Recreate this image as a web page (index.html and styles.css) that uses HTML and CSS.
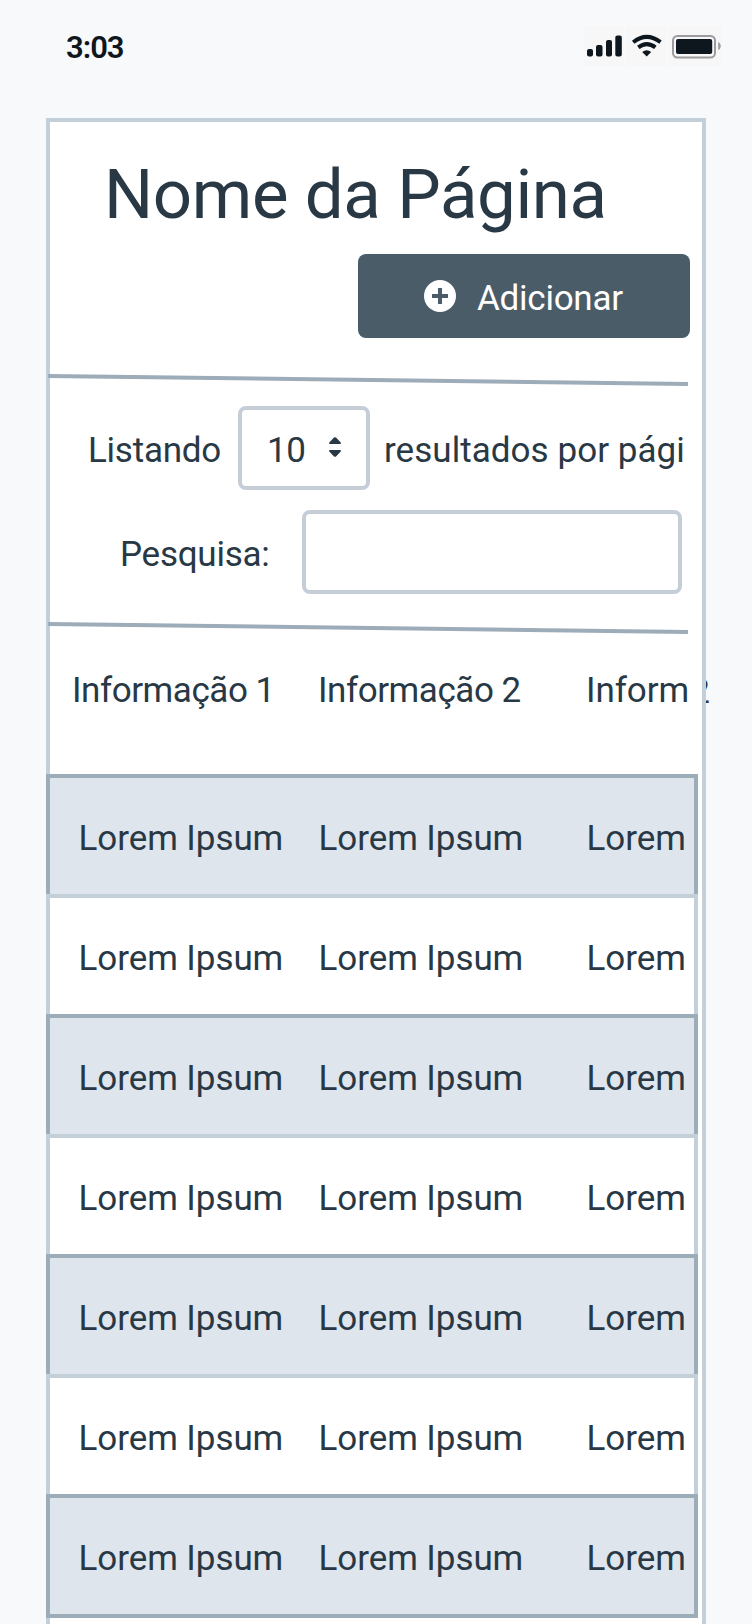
FILE: index.html
```html
<!DOCTYPE html>
<html lang="pt-BR">
<head>
<meta charset="utf-8">
<title>Nome da Página</title>
<link rel="stylesheet" href="styles.css">
</head>
<body>
<div class="screen">
  <header class="status">
    <span class="time">3:03</span>
    <div class="status-icons">
      <svg class="signal" width="40" height="40" viewBox="0 0 40 40"><rect x="3" y="23" width="6" height="7.5" rx="2"/><rect x="12" y="19" width="6.5" height="11.5" rx="2"/><rect x="22" y="14" width="6" height="16.5" rx="2"/><rect x="31.3" y="9.4" width="6.5" height="21.1" rx="2"/></svg>
      <svg class="wifi" width="40" height="40" viewBox="0 0 40 40"><g fill="none" stroke="#0f171e" stroke-width="4"><path d="M7.2 16.2Q20.700 5.600 34.500 16.200"/><path d="M12.300 21.400Q20.700 14.800 29.400 21.400"/></g><path d="M16.200 26Q20.700 22.400 25.200 26L20.700 30.600Z"/></svg>
      <svg class="battery" width="54" height="40" viewBox="0 0 54 40"><rect x="5" y="10" width="42" height="21.500" rx="4.500" fill="none" stroke="#9c9c9e" stroke-width="2"/><rect x="8" y="13" width="36.200" height="15" rx="2"/><path d="M50.200 16Q52.800 17 52.800 20T50.200 24Z" fill="#9c9c9e"/></svg>
    </div>
  </header>
  <span class="overflow-label">2</span>
  <main class="card">
    <h1 class="title">Nome da Página</h1>
    <button class="add"><svg width="32" height="32" viewBox="0 0 32 32"><circle cx="16" cy="16" r="16" fill="#fff"/><path d="M8 16H24M16 8V24" stroke="#4b5c69" stroke-width="4"/></svg><span>Adicionar</span></button>
    <svg class="divider divider-top" width="640" height="12" viewBox="0 0 640 12"><path d="M0 2L640 10" stroke="#9dacb9" stroke-width="4"/></svg>
    <div class="listing">
      <span class="listing-label">Listando</span>
      <div class="select"><span>10</span><svg width="12" height="20" viewBox="0 0 12 20"><path d="M1 7Q-.6 6.600 .5 5.200L5 .6Q6-.3 7 .6L11.500 5.200Q12.600 6.600 11 7ZM1 13H11Q12.600 13.400 11.500 14.800L7 19.400Q6 20.300 5 19.400L.5 14.800Q-.6 13.400 1 13Z"/></svg></div>
      <span class="listing-suffix">resultados por pági</span>
    </div>
    <div class="search">
      <label class="search-label" for="q">Pesquisa:</label>
      <input class="search-input" id="q" type="text">
    </div>
    <svg class="divider divider-bottom" width="640" height="12" viewBox="0 0 640 12"><path d="M0 2L640 10" stroke="#9dacb9" stroke-width="4"/></svg>
    <div class="columns head"><span class="info-first">Informação 1</span><span>Informação 2</span><span class="info-cut">Inform</span></div>
    <div class="rows">
      <div class="columns row shaded"><span>Lorem Ipsum</span><span>Lorem Ipsum</span><span>Lorem</span></div>
      <div class="columns row"><span>Lorem Ipsum</span><span>Lorem Ipsum</span><span>Lorem</span></div>
      <div class="columns row shaded"><span>Lorem Ipsum</span><span>Lorem Ipsum</span><span>Lorem</span></div>
      <div class="columns row"><span>Lorem Ipsum</span><span>Lorem Ipsum</span><span>Lorem</span></div>
      <div class="columns row shaded"><span>Lorem Ipsum</span><span>Lorem Ipsum</span><span>Lorem</span></div>
      <div class="columns row"><span>Lorem Ipsum</span><span>Lorem Ipsum</span><span>Lorem</span></div>
      <div class="columns row shaded"><span>Lorem Ipsum</span><span>Lorem Ipsum</span><span>Lorem</span></div>
    </div>
  </main>
</div>
</body>
</html>
```
FILE: styles.css
```css
* { box-sizing: border-box; }
body { margin: 0; background: #f7f9fb; }
.screen {
  position: relative;
  width: 752px;
  height: 1624px;
  overflow: hidden;
  display: flex;
  flex-direction: column;
  font: 35px/40px Roboto, "Liberation Sans", sans-serif;
  color: #293845;
  white-space: nowrap;
}
svg { display: block; flex: none; }
.status {
  height: 118px;
  flex: none;
  display: flex;
  justify-content: space-between;
  align-items: flex-start;
  padding: 26px 30px 0 66px;
}
.time { font-size: 31px; font-weight: 600; line-height: 44px; color: #0f171e; letter-spacing: -1px; }
.status-icons { display: flex; gap: 2px; fill: #0f171e; }
.status-icons svg { background: #f7f7f7; }
/* sits behind the card, only its right edge shows */
.overflow-label { position: absolute; right: 42px; top: 672px; }
.card {
  position: relative;
  width: 660px;
  height: 1520px;
  flex: none;
  margin-left: 46px;
  border: 4px solid #c3cfd9;
  background: #fff;
  display: flex;
  flex-direction: column;
  align-items: flex-start;
}
.title { margin: 33px 0 0 54px; font-size: 69px; line-height: 80px; font-weight: 400; letter-spacing: -.4px; }
.add {
  align-self: flex-end;
  width: 332px;
  height: 84px;
  margin: 19px 12px 0 0;
  padding: 0 0 0 66px;
  border: 0;
  border-radius: 8px;
  background: #4b5c69;
  color: #fff;
  font: inherit;
  display: flex;
  align-items: center;
  gap: 21px;
}
.add span { padding-top: 6px; letter-spacing: -.25px; }
.divider { margin-left: -2px; }
.divider-top { margin-top: 36px; }
.divider-bottom { margin-top: 28px; }
.listing { height: 84px; margin-top: 20px; padding-left: 38px; display: flex; align-items: center; }
.listing-label { width: 150px; padding-top: 6px; letter-spacing: -.25px; }
.select {
  width: 132px;
  height: 84px;
  border: 4px solid #c5cdd7;
  border-radius: 8px;
  display: flex;
  align-items: center;
  justify-content: space-between;
  padding: 0 25px 0 25px;
  fill: #293845;
}
.select span { padding-top: 6px; letter-spacing: -.5px; }
.select svg { margin-top: -2px; }
.listing-suffix { margin-left: 14px; padding-top: 6px; letter-spacing: .05px; }
.search { height: 84px; margin-top: 20px; padding-left: 70px; display: flex; align-items: center; }
.search-label { width: 182px; padding-top: 6px; letter-spacing: -.25px; }
.search-input { width: 380px; height: 84px; border: 4px solid #c5cdd7; border-radius: 8px; background: #fff; padding: 0 16px; font: inherit; color: inherit; }
.columns { display: grid; grid-template-columns: 240px 268px 100px; }
.head { margin: 33px 0 0 28px; height: 107px; letter-spacing: -.45px; }
.info-first { margin-left: -6px; }
.info-cut { letter-spacing: -.05px; }
.head span { line-height: 48px; }
.rows { margin-left: -4px; display: flex; flex-direction: column; }
.row {
  width: 652px;
  height: 124px;
  margin-bottom: -4px;
  padding: 6px 0 0 28.5px;
  align-items: center;
  border: 4px solid #c3cfd9;
  background: #fff;
  letter-spacing: -.07px;
}
.shaded { border-color: #9dacb9; background: #dfe5ed; }
```
